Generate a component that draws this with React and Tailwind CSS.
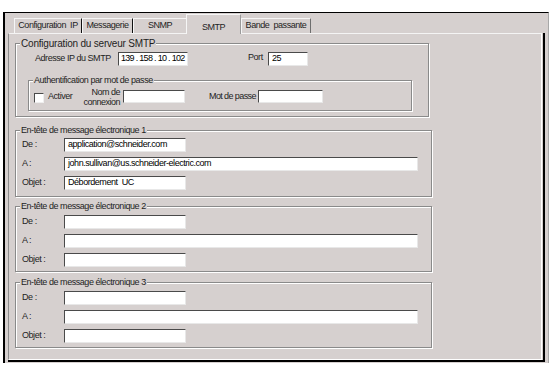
import React from "react";

const BG = "bg-[#d6d0cf]";

function Field({ className = "", value = "" }) {
  return (
    <div
      className={
        "bg-white border-t border-l border-b border-r border-t-[#4a4a4a] border-l-[#4a4a4a] border-b-[#e8e8e8] border-r-[#e8e8e8] flex items-center text-[9px] text-black whitespace-pre overflow-hidden " +
        className
      }
    >
      {value}
    </div>
  );
}

function Group({ legend, legendClass = "", className = "", children }) {
  return (
    <div
      className={
        "relative border border-[#8a8a8a] shadow-[inset_1px_1px_0_#fff,1px_1px_0_#fff] " +
        className
      }
    >
      <span
        className={
          "absolute left-[4px] -top-[6px] px-[1px] leading-[11px] text-[#1e1e1e] whitespace-pre bg-[#d6d0cf] " +
          legendClass
        }
      >
        {legend}
      </span>
      {children}
    </div>
  );
}

function Row({ label, children }) {
  return (
    <div className="flex items-center h-[14px] pl-[6px]">
      <span className="w-[42px] text-[9px] tracking-[-0.45px] text-[#1e1e1e] whitespace-pre">
        {label}
      </span>
      {children}
    </div>
  );
}

function EmailGroup({ n, de = "", a = "", objet = "", className, pt }) {
  return (
    <Group
      legend={"En-tête de message électronique " + n}
      legendClass="text-[9px] tracking-[-0.45px]"
      className={className}
    >
      <div className={"flex flex-col gap-[5px] " + pt}>
        <Row label="De :">
          <Field className="w-[122px] h-[14px] pl-[3px] tracking-[-0.45px]" value={de} />
        </Row>
        <Row label="A :">
          <Field className="w-[354px] h-[14px] pl-[3px] tracking-[-0.45px]" value={a} />
        </Row>
        <Row label="Objet :">
          <Field className="w-[122px] h-[14px] pl-[3px] tracking-[-0.45px]" value={objet} />
        </Row>
      </div>
    </Group>
  );
}

function Tab({ label, className = "", selected = false }) {
  return (
    <div
      className={
        "flex justify-center text-[9px] tracking-[-0.45px] text-[#1e1e1e] whitespace-pre border-t border-l border-t-[#f6f6f6] border-l-[#f6f6f6] " +
        BG +
        " " +
        (selected
          ? "relative z-10 -mb-px h-[20px] items-start pt-[6px] border-r border-r-[#9a9a9a] "
          : "h-[15px] items-center ") +
        className
      }
    >
      {label}
    </div>
  );
}

export default function App() {
  return (
    <div className="w-[556px] h-[368px] bg-white pt-[12px] pl-[3px] font-['Liberation_Sans',Arial,sans-serif] overflow-hidden">
      <div
        className={
          "w-[546px] h-[351px] border-t border-l-2 border-black border-r border-r-[#a8a8a8] flex flex-col " +
          BG
        }
      >
        {/* tabs */}
        <div className="h-[20px] flex items-end pl-[9px] shrink-0">
          <Tab label="Configuration  IP" className="w-[68px] border-r border-r-[#111]" />
          <Tab label="Messagerie" className="w-[51px] border-r border-r-[#111]" />
          <Tab label="SNMP" className="w-[53px]" />
          <Tab label="SMTP" selected className="w-[55px]" />
          <Tab label="Bande  passante" className="w-[70px] border-r border-r-[#6e6e6e]" />
        </div>

        {/* panel */}
        <div className="ml-[3px] w-[537px] h-[329px] border-r-2 border-b-2 border-black">
          <div className="w-[534px] h-[327px] border-l border-t border-r border-b border-l-[#8c8c8c] border-t-[#f4f4f4] border-r-white border-b-white pl-[6px] pt-[9px] flex flex-col">
            {/* Configuration du serveur SMTP */}
            <Group
              legend="Configuration du serveur SMTP"
              legendClass="text-[10px] tracking-[-0.2px]"
              className="w-[414px] h-[74px] shrink-0"
            >
              <div className="pt-[8px] flex items-center h-[22px]">
                <span className="pl-[19px] w-[102px] text-[9px] tracking-[-0.45px] text-[#1e1e1e] whitespace-pre">
                  Adresse IP du SMTP
                </span>
                <Field
                  className="w-[70px] h-[14px] pl-[2px] tracking-[-0.7px]"
                  value="139 . 158 . 10 . 102"
                />
                <span className="ml-[60px] w-[20px] -mt-[3px] text-[9px] tracking-[-0.45px] text-[#1e1e1e]">
                  Port
                </span>
                <Field className="w-[40px] h-[14px] pl-[3px] tracking-[-0.45px]" value="25" />
              </div>

              <Group
                legend="Authentification par mot de passe"
                legendClass="text-[9px] tracking-[-0.45px]"
                className="mt-[14px] ml-[12px] w-[384px] h-[31px]"
              >
                <div className="pt-[9px] flex items-center h-[22px] pl-[5px]">
                  <div className="w-[10px] h-[10px] bg-white border-t border-l border-b border-r border-t-[#4a4a4a] border-l-[#4a4a4a] border-b-[#efefef] border-r-[#efefef] mt-[3px]" />
                  <span className="ml-[4px] w-[30px] text-[9px] tracking-[-0.45px] text-[#1e1e1e]">
                    Activer
                  </span>
                  <div className="w-[42px] flex flex-col items-end text-[9px] leading-[10px] tracking-[-0.5px] text-[#1e1e1e]">
                    <span>Nom de</span>
                    <span>connexion</span>
                  </div>
                  <Field className="ml-[3px] w-[62px] h-[13px]" />
                  <span className="ml-[24px] w-[49px] text-[9px] tracking-[-0.6px] text-[#1e1e1e] whitespace-pre">
                    Mot de passe
                  </span>
                  <Field className="w-[65px] h-[13px]" />
                </div>
              </Group>
            </Group>

            <EmailGroup
              n="1"
              de="application@schneider.com"
              a="john.sullivan@us.schneider-electric.com"
              objet="Débordement  UC"
              className="mt-[13px] w-[417px] h-[67px] shrink-0"
              pt="pt-[7px]"
            />
            <EmailGroup
              n="2"
              className="mt-[9px] w-[417px] h-[66px] shrink-0"
              pt="pt-[8px]"
            />
            <EmailGroup
              n="3"
              className="mt-[10px] w-[417px] h-[66px] shrink-0"
              pt="pt-[8px]"
            />
          </div>
        </div>
      </div>
    </div>
  );
}
